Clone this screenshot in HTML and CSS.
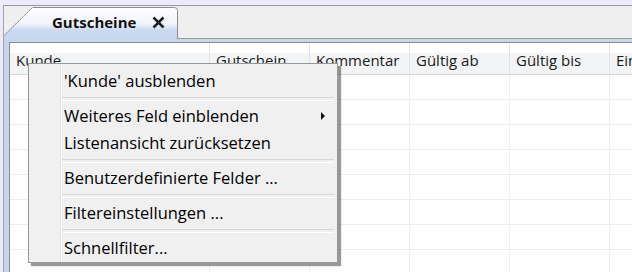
FILE: index.html
```html
<!DOCTYPE html>
<html lang="de">
<head>
  <meta charset="UTF-8">
  <title>Gutscheine</title>
  <link rel="stylesheet" href="styles.css">
</head>
<body>

  <div class="window">
    <div class="tabstrip">
      <div class="tab">
        <svg class="tab-shape" width="174" height="32" viewBox="0 0 174 32">
          <defs>
            <linearGradient id="tabFill" x1="0" y1="0" x2="0" y2="1">
              <stop offset="0" stop-color="#fdfdff"/>
              <stop offset="0.5" stop-color="#f2f5fb"/>
              <stop offset="0.72" stop-color="#cbdaf1"/>
              <stop offset="1" stop-color="#c6d6ef"/>
            </linearGradient>
          </defs>
          <path d="M0,28.5 L28.5,0.5 L170.5,0.5 Q173.5,0.5 173.5,3.5 L173.5,32 L0,32 Z" fill="url(#tabFill)"/>
          <path d="M0,28.5 L28.5,0.5" stroke="#6a6a6a" stroke-width="1" stroke-dasharray="1.5 1" fill="none"/>
          <path d="M28.5,0.5 L170.5,0.5 Q173.5,0.5 173.5,3.5 L173.5,32" stroke="#8e8e8e" stroke-width="1" fill="none"/>
        </svg>
        <span class="tab-title">Gutscheine</span>
        <svg class="tab-close" width="13" height="13" viewBox="0 0 13 13">
          <path d="M1.5,1.5 L11.5,11.5 M11.5,1.5 L1.5,11.5" stroke="#202020" stroke-width="2.5" fill="none"/>
        </svg>
      </div>
    </div>

    <div class="panel">
      <div class="grid">
        <div class="row head">
          <div class="cell">Kunde</div>
          <div class="cell">Gutschein</div>
          <div class="cell">Kommentar</div>
          <div class="cell">Gültig ab</div>
          <div class="cell">Gültig bis</div>
          <div class="cell">Ein</div>
        </div>
        <div class="row"><div class="cell"></div><div class="cell"></div><div class="cell"></div><div class="cell"></div><div class="cell"></div><div class="cell"></div></div>
        <div class="row"><div class="cell"></div><div class="cell"></div><div class="cell"></div><div class="cell"></div><div class="cell"></div><div class="cell"></div></div>
        <div class="row"><div class="cell"></div><div class="cell"></div><div class="cell"></div><div class="cell"></div><div class="cell"></div><div class="cell"></div></div>
        <div class="row"><div class="cell"></div><div class="cell"></div><div class="cell"></div><div class="cell"></div><div class="cell"></div><div class="cell"></div></div>
        <div class="row"><div class="cell"></div><div class="cell"></div><div class="cell"></div><div class="cell"></div><div class="cell"></div><div class="cell"></div></div>
        <div class="row"><div class="cell"></div><div class="cell"></div><div class="cell"></div><div class="cell"></div><div class="cell"></div><div class="cell"></div></div>
        <div class="row"><div class="cell"></div><div class="cell"></div><div class="cell"></div><div class="cell"></div><div class="cell"></div><div class="cell"></div></div>
        <div class="row"><div class="cell"></div><div class="cell"></div><div class="cell"></div><div class="cell"></div><div class="cell"></div><div class="cell"></div></div>
      </div>
    </div>
  </div>

  <div class="context-menu">
    <div class="item">'Kunde' ausblenden</div>
    <div class="sep"></div>
    <div class="item has-sub">Weiteres Feld einblenden</div>
    <div class="item">Listenansicht zurücksetzen</div>
    <div class="sep"></div>
    <div class="item">Benutzerdefinierte Felder ...</div>
    <div class="sep"></div>
    <div class="item">Filtereinstellungen ...</div>
    <div class="sep"></div>
    <div class="item">Schnellfilter...</div>
  </div>

</body>
</html>
```

FILE: styles.css
```css
* {
  box-sizing: border-box;
}

html, body {
  height: 100%;
}

body {
  margin: 0;
  background: #ebebf9;
  font-family: 'Open Sans', 'Noto Sans', sans-serif;
  font-size: 14px;
  color: #111;
  overflow: hidden;
  position: relative;
}

.window {
  margin: 5px 0 0 3px;
}

.tabstrip {
  height: 34px;
  display: flex;
  align-items: flex-end;
  background: #efefef;
  border-top: 1px solid #9a9a9a;
  border-left: 1px solid #a4a4a4;
  border-bottom: 1px solid #9a9a9a;
}

.tab {
  position: relative;
  width: 174px;
  height: 32px;
  margin-bottom: -1px;
  display: flex;
  align-items: center;
  padding: 0 0 2px 48px;
}

.tab-shape {
  position: absolute;
  left: 0;
  top: 0;
}

.tab-title {
  position: relative;
  font-weight: bold;
  font-size: 15px;
  color: #111;
}

.tab-close {
  position: relative;
  margin-left: 16px;
}

.panel {
  border-left: 1px solid #a4a4a4;
  background: #c6d6ef;
  padding: 3px 0 0 5px;
  height: 240px;
}

.grid {
  background: #fff;
  border-top: 1px solid #8a8a8a;
  border-left: 1px solid #8a8a8a;
  height: 100%;
}

.row {
  display: grid;
  grid-template-columns: 200px repeat(5, 100px);
  height: 25px;
}

.cell {
  border-right: 1px solid #eeeeee;
  border-bottom: 1px solid #eeeeee;
}

.head {
  height: 32px;
  background: linear-gradient(#ffffff 30%, #f3f4f6 30%);
}

.head .cell {
  border-right: 1px solid #e4e4e4;
  border-bottom: 1px solid #d6d6d6;
  padding: 7px 0 0 6px;
  font-size: 15px;
  color: #1a1a1a;
  white-space: nowrap;
  overflow: hidden;
}

.context-menu {
  position: absolute;
  left: 28px;
  top: 63px;
  width: 310px;
  padding: 3px 0 1px;
  background: #f0f0f0 linear-gradient(to right, transparent 31px, #e2e3e3 31px, #e2e3e3 32px, #ffffff 32px, #ffffff 33px, transparent 33px);
  border: 1px solid #979797;
  box-shadow: 3px 3px 1px rgba(0, 0, 0, 0.4);
}

.item {
  height: 27px;
  line-height: 27px;
  padding-left: 35px;
  font-size: 16.5px;
  color: #000;
  position: relative;
}

.has-sub::after {
  content: '';
  position: absolute;
  right: 12px;
  top: 10px;
  border-left: 4px solid #111;
  border-top: 4px solid transparent;
  border-bottom: 4px solid transparent;
}

.sep {
  height: 8px;
  margin: 0 3px 0 33px;
  padding-top: 3px;
}

.sep::before {
  content: '';
  display: block;
  height: 2px;
  border-top: 1px solid #d8d8d8;
  border-bottom: 1px solid #ffffff;
}
```
